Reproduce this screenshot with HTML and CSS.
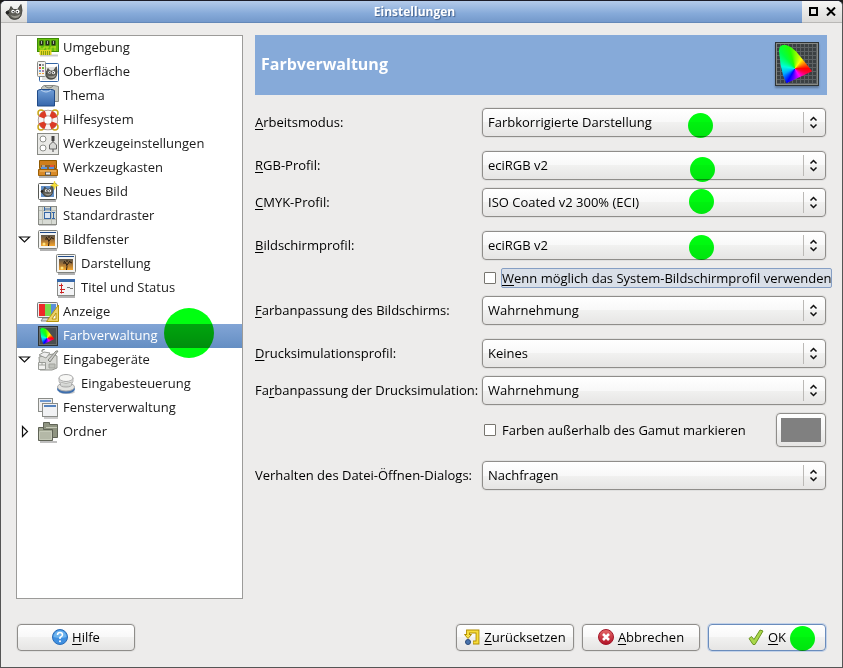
FILE: index.html
```
<!DOCTYPE html>
<html lang="de">
<head>
  <meta charset="UTF-8">
  <meta name="viewport" content="width=device-width,initial-scale=1.0">
  <title>Einstellungen</title>
  <link rel="stylesheet" href="styles.css">
</head>
<body>
  <!-- Gemeinsame Symbole -->
  <svg class="sprites" aria-hidden="true">
    <defs>
      <linearGradient id="sky" x1="0" y1="0" x2="0" y2="1">
        <stop offset="0" stop-color="#5c564a"/>
        <stop offset=".5" stop-color="#a87638"/>
        <stop offset="1" stop-color="#f5a52c"/>
      </linearGradient>
      <linearGradient id="blue" x1="0" y1="0" x2="0" y2="1">
        <stop offset="0" stop-color="#6f9dd6"/>
        <stop offset="1" stop-color="#3767ab"/>
      </linearGradient>
      <linearGradient id="red" x1="0" y1="0" x2="0" y2="1">
        <stop offset="0" stop-color="#e66a6a"/>
        <stop offset="1" stop-color="#b01025"/>
      </linearGradient>
      <linearGradient id="grey" x1="0" y1="0" x2="0" y2="1">
        <stop offset="0" stop-color="#fff"/>
        <stop offset="1" stop-color="#c9cbc8"/>
      </linearGradient>
    </defs>
    <symbol id="wilber" viewBox="0 0 18 16">
      <path d="M4.500 6 6 2.500l2.500 3h4L16 .5l1 6-1 5q-1.500 4-6.500 4-4.500 0-6-4L2 10.500Q.5 9 1.500 7.500z" fill="#5d5c55" stroke="#34342f" stroke-width=".8"/>
      <path d="M5.500 11q5 2.500 10-1-1 4-5 4-3.500 0-5-3z" fill="#9a988f"/>
      <ellipse cx="2.500" cy="8.500" rx="1.800" ry="1.500" fill="#222"/>
      <circle cx="8" cy="7.500" r="1.700" fill="#fff"/>
      <circle cx="12.500" cy="7.500" r="2" fill="#fff"/>
      <circle cx="8.200" cy="7.700" r=".8" fill="#111"/>
      <circle cx="12.300" cy="7.700" r=".8" fill="#111"/>
    </symbol>
    <symbol id="photo" viewBox="0 0 22 22">
      <path d="M3 21h17" stroke="#000" stroke-opacity=".3" stroke-width="2"/>
      <rect x="1.500" y="1.500" width="19" height="18" rx="1" fill="#f4f4f2" stroke="#7f817c"/>
      <path d="M3 3.500h16" stroke="#204a87"/>
      <rect x="4" y="6" width="14" height="11" fill="url(#sky)"/>
      <path d="M11.500 17q1-4 0-6L9 8m3 4 3-4m-4 2H8m7-1 2 1m-5-1V7" stroke="#2a1c10" fill="none"/>
      <circle cx="7" cy="15" r="1.500" fill="#ffe27a"/>
    </symbol>
    <symbol id="arrows" viewBox="0 0 9 13">
      <path d="M1.500 4.500 4.500 1.500 7.500 4.500M1.500 8.500 4.500 11.500 7.500 8.500" fill="none" stroke="#111" stroke-width="1.500"/>
    </symbol>
  </svg>

  <div class="window">
    <header class="titlebar">
      <span class="titlebar-icon"><svg width="18" height="16"><use href="#wilber"/></svg></span>
      <h1>Einstellungen</h1>
      <span class="titlebar-buttons">
        <button type="button" aria-label="Maximieren">
          <svg width="9" height="9" viewBox="0 0 9 9"><rect x="1" y="1" width="7" height="7" fill="none" stroke="#000" stroke-width="2"/></svg>
        </button>
        <button type="button" aria-label="Schließen">
          <svg width="10" height="9" viewBox="0 0 10 9"><path d="M1 .5l8 8m0-8-8 8" stroke="#000" stroke-width="2"/></svg>
        </button>
      </span>
    </header>

    <form class="content">
      <div class="columns">
        <nav class="sidebar">
          <ul class="tree">
            <li>
              <div class="row">
                <svg class="icon" viewBox="0 0 22 22">
                  <path d="M3 18.500h18" stroke="#000" stroke-opacity=".2" stroke-width="2"/>
                  <rect x=".5" y="1.500" width="21" height="13" fill="#67c00e" stroke="#3f8c04"/>
                  <path d="M3 12h4v-2h3v3h4v-3h5M3 11V9m8 0v2m7-2v5" stroke="#c3de25" fill="none"/>
                  <path d="M2.500 13v5h12v-5z" fill="#e2d424"/>
                  <path d="M4.500 14v4m2-4v4m2-4v4m2-4v4m2-4v4" stroke="#86a012"/>
                  <path d="M2.500 3.500h4v5h-4zm6 0h4v5h-4zm6 0h4v5h-4z" fill="#25301a"/>
                  <path d="M4 4h1v3H4zm6 0h1v3h-1zm6 0h1v3h-1z" fill="#a8b3a0"/>
                </svg>
                Umgebung
              </div>
            </li>
            <li>
              <div class="row">
                <svg class="icon" viewBox="0 0 22 22">
                  <rect x="2.500" y="2.500" width="19" height="18" rx="1" fill="#fff" stroke="#3465a4"/>
                  <rect x="5" y="6" width="15" height="13" fill="#e3e3e0"/>
                  <use href="#wilber" x="6" y="5" width="15" height="14"/>
                  <rect x=".5" y=".5" width="8" height="15" rx="1" fill="#f3f3f0" stroke="#888a85"/>
                  <path d="M2 3h2v2H2z" fill="#555"/><path d="M5 3h2v2H5z" fill="#999"/>
                  <path d="M2 6h2v2H2z" fill="#e8554d"/><path d="M5 6h2v2H5z" fill="#74b935"/>
                  <path d="M2 9h2v2H2z" fill="#729fcf"/><path d="M5 9h2v2H5z" fill="#ad7fa8"/>
                  <path d="M2 12h2v1H2zm3 0h2v1H5z" fill="#f1a33a"/>
                </svg>
                Oberfläche
              </div>
            </li>
            <li>
              <div class="row">
                <svg class="icon" viewBox="0 0 22 22">
                  <path d="M4.500 2.500 7 .5h10l4.500 1v15h-17z" fill="#c5c8c1" stroke="#888a85"/>
                  <path d="M8 1q4 4 8 0" fill="none" stroke="#7d8079"/>
                  <path d="M.5 5.500 3 4.500h12l2.500 1v15.500H.5z" fill="url(#blue)" stroke="#204a87"/>
                  <path d="M4 5q5 4 10 0" fill="none" stroke="#bcd3f0"/>
                </svg>
                Thema
              </div>
            </li>
            <li>
              <div class="row">
                <svg class="icon" viewBox="0 0 22 22">
                  <circle cx="4" cy="4" r="3" fill="none" stroke="#c9a617" stroke-width="1.500"/>
                  <circle cx="18" cy="4" r="3" fill="none" stroke="#c9a617" stroke-width="1.500"/>
                  <circle cx="4" cy="18" r="3" fill="none" stroke="#c9a617" stroke-width="1.500"/>
                  <circle cx="18" cy="18" r="3" fill="none" stroke="#c9a617" stroke-width="1.500"/>
                  <circle cx="11" cy="11" r="7" fill="#fff" stroke="#a08c88" stroke-width="6.500"/>
                  <circle cx="11" cy="11" r="7" fill="none" stroke="#f7f4f2" stroke-width="5"/>
                  <circle cx="11" cy="11" r="7" fill="none" stroke="#dc3b25" stroke-width="5.500" stroke-dasharray="6 5" stroke-dashoffset="-2.500"/>
                </svg>
                Hilfesystem
              </div>
            </li>
            <li>
              <div class="row">
                <svg class="icon" viewBox="0 0 22 22">
                  <rect x=".5" y=".5" width="21" height="21" fill="#e9e9e6" stroke="#888a85"/>
                  <circle cx="6" cy="6" r="3" fill="#fff" stroke="#8d8f8a"/>
                  <circle cx="6" cy="15" r="3" fill="#fff" stroke="#8d8f8a"/>
                  <path d="M16 3v16" stroke="#777" stroke-width="1.500"/>
                  <path d="M14.500 3h3v5h-3z" fill="#444"/>
                  <path d="M12.500 16v-4l3-3h1l3 3v4z" fill="#d8d9d6" stroke="#666"/>
                </svg>
                Werkzeugeinstellungen
              </div>
            </li>
            <li>
              <div class="row">
                <svg class="icon" viewBox="0 0 22 22">
                  <path d="M2 20h18" stroke="#000" stroke-opacity=".3" stroke-width="2"/>
                  <path d="M2.500 3.500h17v8h-17z" fill="#cf7e1c" stroke="#8f5902"/>
                  <path d="M1.500 12.500h19v6h-19z" fill="#d98a28" stroke="#9b5f06"/>
                  <path d="M4 8h14v4H4z" fill="#8a6130"/>
                  <path d="M4 11h6m2 0h5" stroke="#5b93dc" stroke-width="2" fill="none"/>
                  <path d="M5 9h3" stroke="#ddd"/>
                  <path d="M13 9h4" stroke="#e8532f" stroke-width="2"/>
                  <path d="M8.500 18v-3h5v3z" fill="#eee" stroke="#555"/>
                  <path d="M3 14h16" stroke="#f9c36e"/>
                </svg>
                Werkzeugkasten
              </div>
            </li>
            <li>
              <div class="row">
                <svg class="icon" viewBox="0 0 22 22">
                  <path d="M3 20h16" stroke="#000" stroke-opacity=".3" stroke-width="2"/>
                  <rect x="1.500" y="2.500" width="18" height="16" rx="1" fill="#fff" stroke="#555753"/>
                  <rect x="4" y="5" width="13" height="11" fill="#6290c8"/>
                  <use href="#wilber" x="3" y="4" width="14" height="12"/>
                  <path d="M17.500 0l1 3 3 1.500-3 1-1 3-1-3-3-1 3-1.500z" fill="#f5e03a" stroke="#e0c21a" stroke-width=".5"/>
                </svg>
                Neues Bild
              </div>
            </li>
            <li>
              <div class="row">
                <svg class="icon" viewBox="0 0 22 22">
                  <path d="M2 20h17" stroke="#000" stroke-opacity=".2" stroke-width="2"/>
                  <rect x="1.500" y="1.500" width="18" height="18" fill="#d8dbd5" stroke="#888a85"/>
                  <path d="M5.500 2v17m9-17v17M2 5.500h17m-17 9h17" stroke="#b8bcb3"/>
                  <rect x="7.500" y="7.500" width="6" height="6" fill="#dbe5f0" stroke="#3465a4"/>
                  <path d="M7.500 2v4m6-4v4m-6-2h6M15 7.500h3m-3 6h3m-1.500-6v6" stroke="#3465a4"/>
                </svg>
                Standardraster
              </div>
            </li>
            <li>
              <div class="row">
                <button class="toggle" type="button" aria-label="Bildfenster zuklappen"><svg width="13" height="13" viewBox="0 0 13 13"><path d="M1.500 4h10L6.500 9z" fill="#fff" stroke="#111" stroke-width="1.200"/></svg></button>
                <svg class="icon"><use href="#photo"/></svg>
                Bildfenster
              </div>
              <ul>
                <li>
                  <div class="row">
                    <svg class="icon"><use href="#photo"/></svg>
                    Darstellung
                  </div>
                </li>
                <li>
                  <div class="row">
                    <svg class="icon" viewBox="0 0 22 22">
                      <path d="M3 20h17" stroke="#000" stroke-opacity=".3" stroke-width="2"/>
                      <rect x="2.500" y="2.500" width="17" height="16" fill="#f3f4f6" stroke="#8a8c88"/>
                      <path d="M2 2h18v3H2z" fill="#3768aa"/>
                      <path d="M6.500 6.500v10M4 8.500h4m-3 4h5m-5 3h4" stroke="#cc2222"/>
                      <path d="M12 10.500h3m0 1h3" stroke="#777"/>
                    </svg>
                    Titel und Status
                  </div>
                </li>
              </ul>
            </li>
            <li>
              <div class="row">
                <svg class="icon" viewBox="0 0 22 22">
                  <path d="M4 20h8l-1-3H6z" fill="#ddd" stroke="#888"/>
                  <rect x=".5" y="1.500" width="20" height="15" rx="1" fill="#eee" stroke="#777"/>
                  <path d="M2 3h6v12H2z" fill="#ef2929"/>
                  <path d="M8 3h6v12H8z" fill="#78dc4a"/>
                  <path d="M14 3h5v12h-5z" fill="#5b90d8"/>
                  <path d="M9.500 20.500 21.500 4v16.500z" fill="#ecd36a" stroke="#b7950b"/>
                  <path d="M15 18l4-6v6z" fill="#fff" stroke="#b7950b"/>
                </svg>
                Anzeige
              </div>
            </li>
            <li>
              <div class="row selected">
                <span class="icon gamut"><i></i></span>
                Farbverwaltung
                <span class="marker marker-big"></span>
              </div>
            </li>
            <li>
              <div class="row">
                <button class="toggle" type="button" aria-label="Eingabegeräte zuklappen"><svg width="13" height="13" viewBox="0 0 13 13"><path d="M1.500 4h10L6.500 9z" fill="#fff" stroke="#111" stroke-width="1.200"/></svg></button>
                <svg class="icon" viewBox="0 0 22 22">
                  <path d="M2 8l14-3 4 2v12l-5 2H3z" fill="#d7d8d4" stroke="#92948f"/>
                  <path d="M2 6l5-3 6 1-4 5z" fill="#eee" stroke="#999b96"/>
                  <path d="M5 3V1l3-1m3 11 8-9 2 0-8 11z" fill="#ccc" stroke="#85877f"/>
                  <path d="M1.500 13.500h7v7h-7z" fill="#f1f1ef" stroke="#999b96"/>
                  <path d="M2 16h6m-3-2v2m7-1h6v4h-6z" fill="#bfc1bb" stroke="#a0a29c"/>
                </svg>
                Eingabegeräte
              </div>
              <ul>
                <li>
                  <div class="row">
                    <svg class="icon" viewBox="0 0 22 22">
                      <ellipse cx="12" cy="19" rx="8" ry="2" fill="#000" fill-opacity=".2"/>
                      <ellipse cx="11" cy="16" rx="9" ry="4.500" fill="#3e6fae"/>
                      <ellipse cx="11" cy="14" rx="8.500" ry="4" fill="#e4e4e1" stroke="#aaa"/>
                      <path d="M4 5q-.5 4 1.500 6-1 3 5.500 3t5.500-3q2-2 1.500-6z" fill="url(#grey)" stroke="#aaa"/>
                      <ellipse cx="11" cy="5" rx="7" ry="3.500" fill="#f7f7f5" stroke="#aaa"/>
                      <path d="M5 9q6 3 12 0" fill="none" stroke="#b5b5b2"/>
                    </svg>
                    Eingabesteuerung
                  </div>
                </li>
              </ul>
            </li>
            <li>
              <div class="row">
                <svg class="icon" viewBox="0 0 22 22">
                  <path d="M7 21h14" stroke="#000" stroke-opacity=".2" stroke-width="2"/>
                  <rect x="1.500" y="1.500" width="14" height="13" fill="#eee" stroke="#8a8c88"/>
                  <path d="M3 4h11" stroke="#6d98d0" stroke-width="2"/>
                  <rect x="5.500" y="6.500" width="15" height="13" fill="#f1f2f4" stroke="#8a8c88"/>
                  <path d="M7 9h12" stroke="#5582bd" stroke-width="2"/>
                </svg>
                Fensterverwaltung
              </div>
            </li>
            <li>
              <div class="row">
                <button class="toggle" type="button" aria-label="Ordner aufklappen"><svg width="13" height="13" viewBox="0 0 13 13"><path d="M4.500 1.500v10L9.500 6.500z" fill="#fff" stroke="#111" stroke-width="1.200"/></svg></button>
                <svg class="icon" viewBox="0 0 22 22">
                  <path d="M3 21h17" stroke="#000" stroke-opacity=".25" stroke-width="2"/>
                  <path d="M6.500 1.500h6v2h8v13h-14z" fill="#8f9481" stroke="#5f6356"/>
                  <path d="M9 6.500h11" stroke="#c5c9b8"/>
                  <path d="M1.500 6.500h5v2h9v11h-14z" fill="#a0a592" stroke="#5f6356"/>
                  <path d="M2.500 10.500h12v8h-12z" fill="#b4b8a7" stroke="#c5c9b8"/>
                </svg>
                Ordner
              </div>
            </li>
          </ul>
        </nav>

        <main class="panel">
          <div class="banner">
            <h2>Farbverwaltung</h2>
            <span class="gamut gamut-big"><i></i></span>
          </div>

          <div class="sections">
            <section class="fields">
              <label for="modus"><u>A</u>rbeitsmodus:</label>
              <div class="select">
                <select id="modus"><option>Farbkorrigierte Darstellung</option></select>
                <svg class="arrows"><use href="#arrows"/></svg>
                <span class="marker marker-modus"></span>
              </div>
            </section>

            <section class="fields">
              <label for="rgb"><u>R</u>GB-Profil:</label>
              <div class="select">
                <select id="rgb"><option>eciRGB v2</option></select>
                <svg class="arrows"><use href="#arrows"/></svg>
                <span class="marker marker-rgb"></span>
              </div>
              <label for="cmyk"><u>C</u>MYK-Profil:</label>
              <div class="select">
                <select id="cmyk"><option>ISO Coated v2 300% (ECI)</option></select>
                <svg class="arrows"><use href="#arrows"/></svg>
                <span class="marker marker-cmyk"></span>
              </div>
            </section>

            <section class="fields">
              <label for="bildschirm"><u>B</u>ildschirmprofil:</label>
              <div class="select">
                <select id="bildschirm"><option>eciRGB v2</option></select>
                <svg class="arrows"><use href="#arrows"/></svg>
                <span class="marker marker-bildschirm"></span>
              </div>
              <div class="check">
                <input type="checkbox" id="system">
                <label class="focused" for="system"><u>W</u>enn möglich das System-Bildschirmprofil verwenden</label>
              </div>
              <label for="anpassung"><u>F</u>arbanpassung des Bildschirms:</label>
              <div class="select">
                <select id="anpassung"><option>Wahrnehmung</option></select>
                <svg class="arrows"><use href="#arrows"/></svg>
              </div>
            </section>

            <section class="fields">
              <label for="druck"><u>D</u>rucksimulationsprofil:</label>
              <div class="select">
                <select id="druck"><option>Keines</option></select>
                <svg class="arrows"><use href="#arrows"/></svg>
              </div>
              <label for="druckanpassung">Fa<u>r</u>banpassung der Drucksimulation:</label>
              <div class="select">
                <select id="druckanpassung"><option>Wahrnehmung</option></select>
                <svg class="arrows"><use href="#arrows"/></svg>
              </div>
              <div class="check">
                <input type="checkbox" id="gamut">
                <label for="gamut">Farben außerhalb des Gamut markieren</label>
                <button class="color" type="button" aria-label="Warnfarbe"><span></span></button>
              </div>
            </section>

            <section class="fields">
              <label for="verhalten">Verhalten des Datei-Öffnen-Dialogs:</label>
              <div class="select">
                <select id="verhalten"><option>Nachfragen</option></select>
                <svg class="arrows"><use href="#arrows"/></svg>
              </div>
            </section>
          </div>
        </main>
      </div>

      <footer class="actions">
        <button class="btn help" type="button">
          <svg width="16" height="16" viewBox="0 0 16 16">
            <circle cx="8" cy="8" r="7.500" fill="#3f8fe0" stroke="#2a6db8"/>
            <path d="M1.500 8a6.500 6.500 0 0 1 13 0q-6 2-13 0z" fill="#6db4ee"/>
            <path d="M5.500 6q0-2.500 2.500-2.500T10.500 6Q10.500 7 8 8.500V10" fill="none" stroke="#fff" stroke-width="1.500"/>
            <circle cx="8" cy="12.200" r="1" fill="#fff"/>
          </svg>
          <span><u>H</u>ilfe</span>
        </button>
        <button class="btn" type="reset">
          <svg width="16" height="16" viewBox="0 0 16 16">
            <path d="M4 6V2.500h9.500v11H9" fill="none" stroke="#b08c00" stroke-width="3.800"/>
            <path d="M.5 5.500h7L4 9.500z" fill="#fce94f" stroke="#b08c00"/>
            <path d="M4 7V2.500h9.500v11H9.500" fill="none" stroke="#f8dd3c" stroke-width="2"/>
            <circle cx="4" cy="13" r="2.500" fill="#4a74ad" stroke="#2b4a78"/>
          </svg>
          <span><u>Z</u>urücksetzen</span>
        </button>
        <button class="btn" type="button">
          <svg width="16" height="16" viewBox="0 0 16 16">
            <circle cx="8" cy="8" r="7.500" fill="url(#red)" stroke="#a3182a"/>
            <path d="M5 5l6 6m0-6-6 6" stroke="#fff" stroke-width="2.600"/>
          </svg>
          <span><u>A</u>bbrechen</span>
        </button>
        <button class="btn default" type="submit">
          <svg width="16" height="16" viewBox="0 0 16 16">
            <path d="M1 9.500 3.500 7.500 6 10.500 12 1 15 2 7 15.500H5z" fill="#a9d84a" stroke="#6a9422" stroke-linejoin="round"/>
          </svg>
          <span><u>O</u>K</span>
          <span class="marker marker-ok"></span>
        </button>
      </footer>
    </form>
  </div>
</body>
</html>
```
FILE: styles.css
```
* {
  box-sizing: border-box;
}
body {
  margin: 0;
  background: #1a1a1a;
  font-family: "Open Sans", "Noto Sans", sans-serif;
  font-size: 13px;
  line-height: 20px;
  color: #000;
}
ul {
  list-style: none;
  margin: 0;
  padding: 0;
}
h1, h2 {
  margin: 0;
  color: #fff;
}
svg {
  flex-shrink: 0;
}
button, select {
  font: inherit;
  color: inherit;
}
u {
  text-underline-offset: 2px;
}
.sprites {
  position: absolute;
  width: 0;
  height: 0;
}

/* Fenster */
.window {
  display: flex;
  flex-direction: column;
  min-height: 100vh;
  border: 1px solid #555;
  border-top-color: #1c1c28;
  border-radius: 6px 6px 0 0;
  background: #edeceb;
  overflow: hidden;
}
.titlebar {
  display: flex;
  height: 22px;
  background: linear-gradient(#b4cbea, #86aad9 60%, #7499cb);
  border-bottom: 1px solid #6488b8;
}
.titlebar h1 {
  flex: 1;
  font-size: 12px;
  line-height: 22px;
  text-align: center;
  text-shadow: 1px 1px 1px #46648f;
}
.titlebar-icon,
.titlebar-buttons {
  display: flex;
  align-items: center;
  justify-content: center;
  height: 22px;
  background: linear-gradient(#f6f6f5, #dcdbd9);
  border-bottom: 1px solid #b9b8b6;
}
.titlebar-icon {
  width: 26px;
}
.titlebar-buttons {
  width: 40px;
  gap: 8px;
}
.titlebar-buttons button {
  display: flex;
  padding: 0;
  border: 0;
  background: none;
}

/* Inhalt */
.content {
  flex: 1;
  display: flex;
  flex-direction: column;
  gap: 25px;
  padding: 12px 15px 16px;
}
.columns {
  flex: 1;
  display: flex;
  gap: 12px;
}

/* Baum */
.sidebar {
  width: 227px;
  flex-shrink: 0;
  border: 1px solid #9c9b99;
  background: #fff;
}
.row {
  position: relative;
  display: flex;
  align-items: center;
  gap: 4px;
  height: 24px;
  padding: 0 0 2px 20px;
  color: #1a1a1a;
}
.tree ul .row {
  padding-left: 38px;
}
.row.selected {
  background: linear-gradient(#82a5d6, #648ec3);
  color: #fff;
}
.icon {
  width: 22px;
  height: 22px;
  margin-top: 2px;
}
.toggle {
  position: absolute;
  left: 1px;
  display: flex;
  padding: 0;
  border: 0;
  background: none;
}

/* Farbraum-Symbol */
.gamut {
  position: relative;
  display: block;
  border: 1px solid #2e3436;
  background: repeating-linear-gradient(90deg, #5d6264 0 1px, transparent 1px 4px),
    repeating-linear-gradient(#5d6264 0 1px, #3b4042 1px 4px);
  box-shadow: inset 0 0 0 1px #888a85, 0 2px 2px rgba(0,0,0,0.3);
}
.gamut i {
  position: absolute;
  inset: 0;
  background: conic-gradient(from 0deg at 45% 61%, #7f0 0deg, #ff0 35deg, #f80 60deg, #f00 90deg, #f04 110deg, #f0f 150deg, #50f 190deg, #00f 210deg, #0af 245deg, #0fd 280deg, #0f4 320deg, #2f0 345deg, #7f0 360deg);
  clip-path: polygon(7% 18%, 9% 9%, 15% 5%, 24% 5%, 36% 10%, 48% 20%, 66% 42%, 86% 67%, 25% 96%, 17% 78%, 11% 52%);
}
.gamut.icon {
  width: 20px;
  height: 20px;
  margin: 2px 1px 0;
  background: #4a4e50;
  box-shadow: inset 0 0 0 1px #6b6e6c;
}
.gamut-big {
  width: 44px;
  height: 44px;
}

/* Einstellungen */
.panel {
  flex: 1;
  min-width: 0;
}
.banner {
  display: flex;
  align-items: center;
  justify-content: space-between;
  height: 60px;
  padding: 0 8px 2px 6px;
  background: #86aad9;
}
.banner h2 {
  font-size: 16px;
}
.sections {
  display: flex;
  flex-direction: column;
  gap: 14px;
  padding-top: 13px;
}
.fields {
  display: grid;
  grid-template-columns: 220px minmax(0, 1fr);
  column-gap: 7px;
  row-gap: 8px;
  align-items: center;
}
.fields > label {
  padding-bottom: 2px;
  white-space: nowrap;
}
.select {
  position: relative;
  margin-right: 1px;
}
.select select {
  display: block;
  appearance: none;
  width: 100%;
  height: 29px;
  padding: 0 30px 2px 5px;
}
.select::after {
  content: "";
  position: absolute;
  top: 4px;
  bottom: 4px;
  right: 22px;
  width: 1px;
  background: #bbb9b6;
}
.arrows {
  position: absolute;
  top: 8px;
  right: 8px;
  width: 9px;
  height: 13px;
}
.select select,
.btn,
.color {
  border: 1px solid #8f8d8a;
  border-radius: 4px;
  background: linear-gradient(#fff, #f8f8f8 50%, #f1f1f0 50%, #e6e5e4);
  box-shadow: 0 0 0 1px rgba(0,0,0,0.05);
}
.check {
  grid-column: 2;
  display: flex;
  align-items: center;
  gap: 5px;
  min-height: 20px;
  padding-left: 2px;
}
.check input {
  appearance: none;
  width: 12px;
  height: 12px;
  margin: 0;
  border: 1px solid #77756f;
  border-radius: 1px;
  background: #fff;
  flex-shrink: 0;
}
.check input:checked {
  background: #648ec3;
}
.check label {
  border: 1px solid transparent;
  border-radius: 2px;
  line-height: 18px;
  white-space: nowrap;
}
.check .focused {
  flex: 1;
  border-color: #869fc4;
  background: #d9dfe8;
}
.color {
  width: 50px;
  height: 34px;
  margin: 0 1px 0 auto;
  padding: 4px;
}
.color span {
  display: block;
  height: 24px;
  background: #808080;
}

/* Schaltflächen */
.actions {
  display: flex;
  gap: 8px;
  padding: 0 1px;
}
.btn {
  position: relative;
  display: flex;
  align-items: center;
  justify-content: center;
  gap: 4px;
  width: 118px;
  height: 27px;
  padding: 0 0 2px;
}
.help {
  margin-right: auto;
}
.btn.default {
  border-color: #6a8cbc;
  box-shadow: 0 0 0 1px #c3d2e8;
}

/* Grüne Markierungen */
.marker {
  position: absolute;
  width: 25px;
  height: 25px;
  border-radius: 50%;
  background: #00ff10;
  mix-blend-mode: multiply;
  pointer-events: none;
}
.marker-big {
  top: -16px;
  left: 147px;
  width: 50px;
  height: 50px;
  z-index: 1;
}
.marker-modus {
  top: 5px;
  left: 206px;
}
.marker-rgb {
  top: 6px;
  left: 208px;
}
.marker-cmyk {
  top: 1px;
  left: 207px;
}
.marker-bildschirm {
  top: 4px;
  left: 207px;
}
.marker-ok {
  top: 1px;
  right: 10px;
}
```
